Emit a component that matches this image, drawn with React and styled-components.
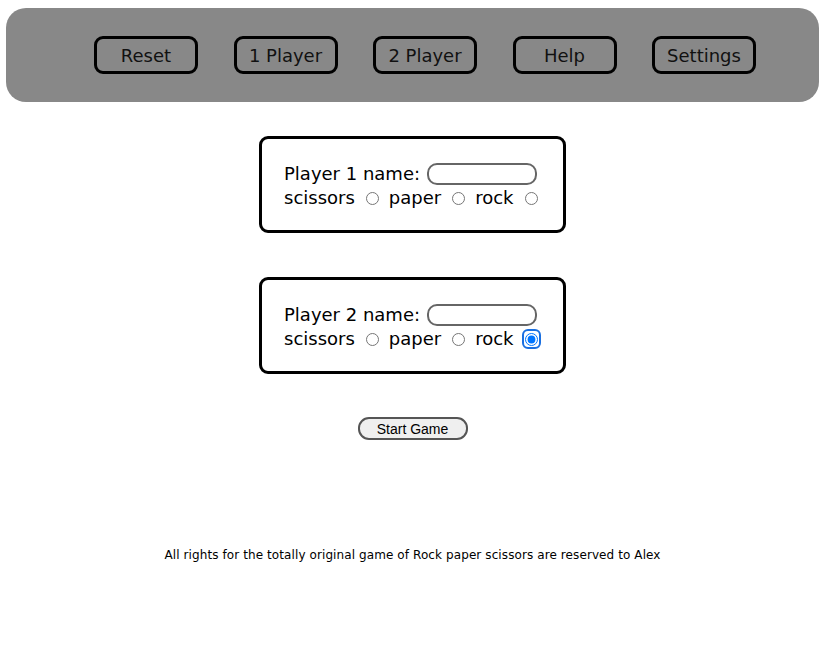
import React from "react";
import styled, { createGlobalStyle } from "styled-components";

const Global = createGlobalStyle`
  body { margin: 8px 8px 8px 6px; font-family: "DejaVu Sans", Verdana, sans-serif; background: #fff; }
`;

const Header = styled.header`
  background: #888888;
  height: 94px;
  border-radius: 20px;
  display: flex;
  align-items: center;
  padding-left: 88px;
  gap: 35.5px;
  box-sizing: border-box;
`;

const NavButton = styled.button`
  width: 104px;
  height: 38px;
  box-sizing: border-box;
  border: 3px solid #000;
  border-radius: 9px;
  background: transparent;
  font-family: "DejaVu Sans", Verdana, sans-serif;
  font-size: 18px;
  color: #111;
  padding: 0;
`;

const Main = styled.main`
  display: flex;
  flex-direction: column;
  align-items: center;
`;

const Card = styled.div`
  width: 307px;
  box-sizing: border-box;
  border: 3px solid #000;
  border-radius: 9px;
  padding: 23px 22px 20px;
  margin-top: ${(p) => p.$top}px;
  font-size: 18px;
  line-height: 24px;
  color: #000;
`;

const Row = styled.div`
  display: flex;
  align-items: center;
  height: 24px;
  white-space: nowrap;
`;

const NameInput = styled.input`
  width: 110px;
  height: 22px;
  box-sizing: border-box;
  border: 2px solid #666;
  border-radius: 10px;
  margin: 0 0 0 7px;
  padding: 0 6px;
`;

const Radio = styled.input.attrs({ type: "radio" })`
  width: 13px;
  height: 13px;
  margin: 0 10px 0 11px;
`;

const FocusRing = styled.span`
  display: inline-flex;
  align-items: center;
  justify-content: center;
  margin-left: 8px;
  width: 20px;
  height: 20px;
  box-sizing: border-box;
  border: 2px solid #1a6fe0;
  border-radius: 6px;

  & > input {
    margin: 0;
  }
`;

const StartButton = styled.button`
  margin-top: 43px;
  width: 110px;
  height: 23px;
  box-sizing: border-box;
  border: 2px solid #555;
  border-radius: 11px;
  background: #efefef;
  font-family: "Liberation Sans", Arial, sans-serif;
  font-size: 14px;
  color: #000;
  padding: 0;
`;

const Footer = styled.footer`
  margin-top: 108px;
  font-size: 12px;
  letter-spacing: 0.008em;
  text-align: center;
  color: #000;
`;

function PlayerCard({ n, top, checked }) {
  return (
    <Card $top={top}>
      <Row>
        Player {n} name: <NameInput type="text" />
      </Row>
      <Row>
        scissors<Radio name={"p" + n} />paper<Radio name={"p" + n} />rock
        {checked ? (
          <FocusRing>
            <Radio name={"p" + n} defaultChecked />
          </FocusRing>
        ) : (
          <Radio name={"p" + n} />
        )}
      </Row>
    </Card>
  );
}

export default function App() {
  return (
    <>
      <Global />
      <Header>
        <NavButton>Reset</NavButton>
        <NavButton>1 Player</NavButton>
        <NavButton>2 Player</NavButton>
        <NavButton>Help</NavButton>
        <NavButton>Settings</NavButton>
      </Header>
      <Main>
        <PlayerCard n={1} top={34} />
        <PlayerCard n={2} top={44} checked />
        <StartButton>Start Game</StartButton>
        <Footer>
          All rights for the totally original game of Rock paper scissors are reserved to Alex
        </Footer>
      </Main>
    </>
  );
}
